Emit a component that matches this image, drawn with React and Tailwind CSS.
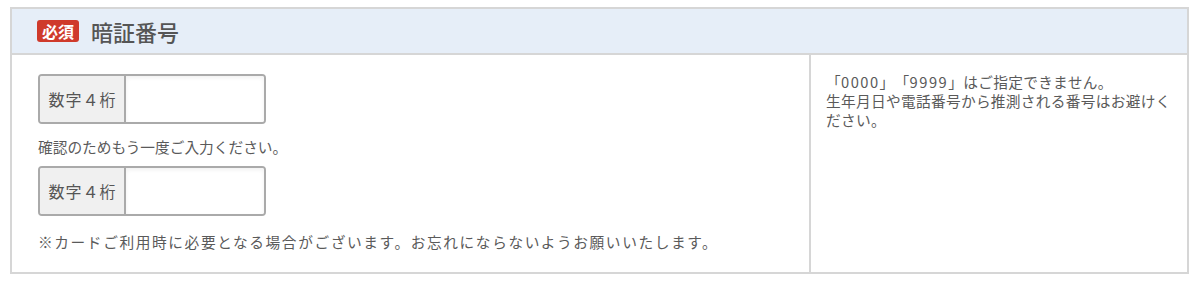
import React from "react";

function PinInput() {
  return (
    <div className="flex h-[50px] w-[228px] overflow-hidden rounded-[4px] border-2 border-[#aaaaaa]">
      <div className="flex w-[86px] shrink-0 items-center justify-center border-r-2 border-[#aaaaaa] bg-[#f0f0f0] pl-[1px] text-[16px] tracking-[1px] text-[#555]">
        数字４桁
      </div>
      <input
        type="text"
        className="min-w-0 flex-1 bg-white px-2 text-[15px] text-[#333] shadow-[inset_0_2px_4px_rgba(0,0,0,0.06)] outline-none"
      />
    </div>
  );
}

export default function App() {
  return (
    <div
      className="w-[1200px] bg-white px-[10px] pt-[7px]"
      style={{ fontFamily: '"Noto Sans CJK JP", "Noto Sans", sans-serif' }}
    >
      <div className="w-[1179px] border-2 border-[#d6d6d6]">
        <div className="flex h-[46px] items-center border-b-2 border-[#d6d6d6] bg-[#e6eef8] pl-[25px]">
          <span className="flex h-[22px] w-[42px] items-center justify-center rounded-[3px] bg-[#cf3a2b] text-[16px] font-bold leading-none text-white">
            必須
          </span>
          <span className="ml-[12px] text-[22px] font-medium leading-none text-[#555]">
            暗証番号
          </span>
        </div>
        <div className="flex h-[217px]">
          <div className="flex w-[799px] shrink-0 flex-col border-r-2 border-[#d6d6d6] pl-[26px] pt-[19px]">
            <PinInput />
            <p className="mt-[13px] text-[14.7px] leading-[20px] text-[#5a5a5a] [text-spacing-trim:space-all]">
              確認のためもう一度ご入力ください。
            </p>
            <div className="mt-[9px]">
              <PinInput />
            </div>
            <p className="mt-[16px] text-[14.7px] leading-[20px] tracking-[1.6px] text-[#5a5a5a] [text-spacing-trim:space-all]">
              ※カードご利用時に必要となる場合がございます。お忘れにならないようお願いいたします。
            </p>
          </div>
          <div className="flex-1 pl-[15px] pr-[8px] pt-[17px] text-[14.7px] leading-[19px] tracking-[0.3px] text-[#5a5a5a] [text-spacing-trim:space-all]">
            <p>
              「<span className="tracking-[1.5px]">0000</span>」「
              <span className="tracking-[1.5px]">9999</span>」はご指定できません。
            </p>
            <p>生年月日や電話番号から推測される番号はお避けください。</p>
          </div>
        </div>
      </div>
    </div>
  );
}
